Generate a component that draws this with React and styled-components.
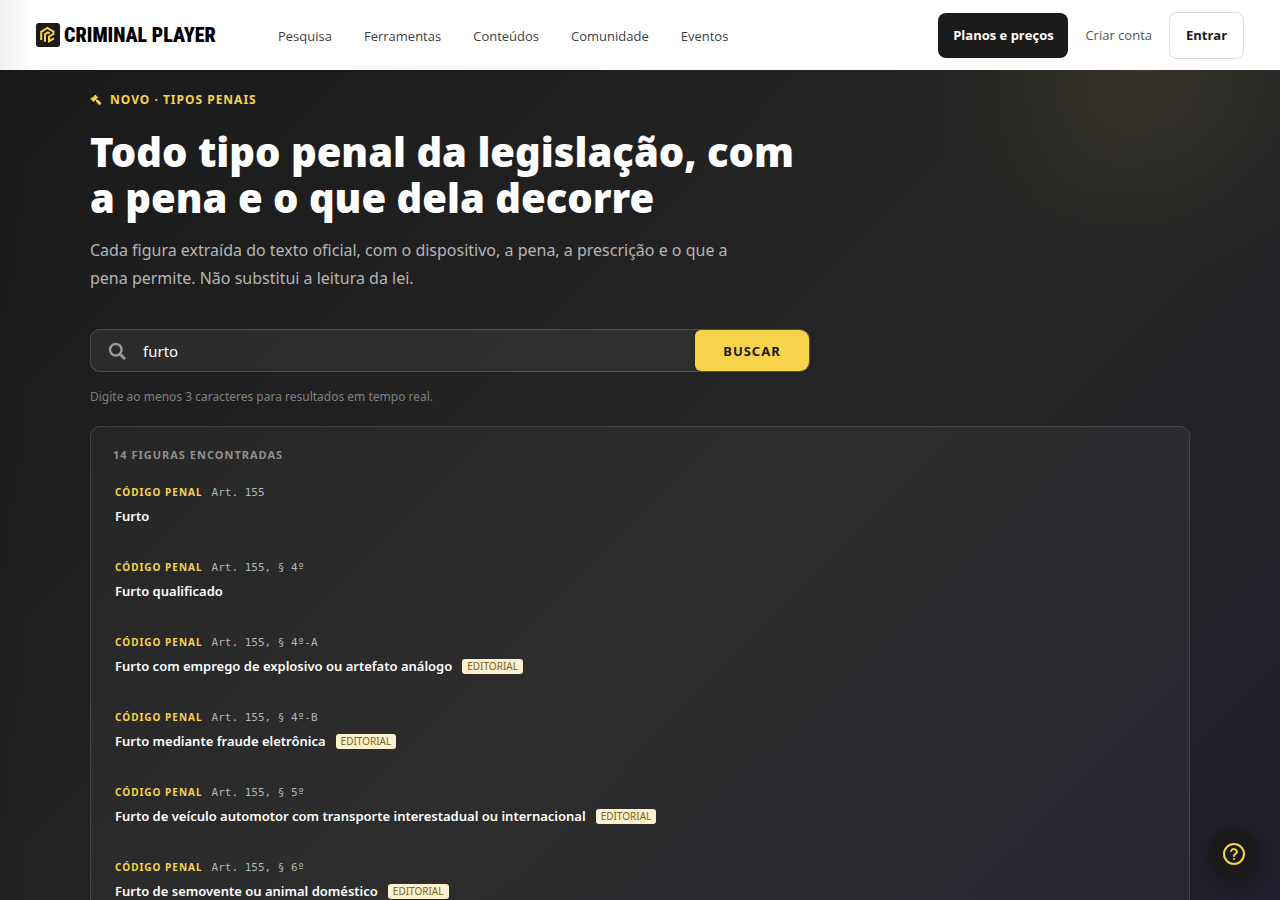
import React, { useState } from "react";
import styled, { createGlobalStyle } from "styled-components";

const GlobalStyle = createGlobalStyle`
  * {
    box-sizing: border-box;
  }
  html, body {
    margin: 0;
    height: 100%;
    overflow: hidden;
  }
  #root {
    height: 100%;
  }
  body, button, input {
    font-family: "Segoe UI", "Noto Sans", "Open Sans", sans-serif;
  }
  a {
    color: inherit;
    text-decoration: none;
  }
`;

const Page = styled.div`
  display: flex;
  flex-direction: column;
  height: 100%;
  position: relative;
`;

const EdgeShade = styled.div`
  position: absolute;
  inset: 0 auto 0 0;
  width: 32px;
  background: linear-gradient(90deg, rgba(0, 0, 0, 0.06), rgba(0, 0, 0, 0));
  pointer-events: none;
`;

const Header = styled.header`
  display: flex;
  align-items: center;
  flex: 0 0 70px;
  padding: 0 36px;
  background: #fff;
  font-family: "Segoe UI", "Open Sans", sans-serif;
`;

const Brand = styled.a`
  display: flex;
  align-items: center;
  gap: 4px;
  width: 226px;
  font-family: "Roboto Condensed", Roboto, sans-serif;
  font-size: 20px;
  font-weight: 900;
  line-height: 24px;
  color: #000;
  white-space: nowrap;
`;

const Nav = styled.nav`
  display: flex;
  gap: 32px;
  margin-left: 16px;
  padding-top: 2px;
  font-size: 13px;
  font-weight: 500;
  color: #404040;
`;

const Account = styled.div`
  display: flex;
  align-items: center;
  gap: 17px;
  margin-left: auto;
  font-size: 13px;
  color: #555;
`;

const HeaderButton = styled.a`
  display: flex;
  align-items: center;
  justify-content: center;
  min-width: ${(props) => (props.$dark ? "130px" : "75px")};
  height: ${(props) => (props.$dark ? "45px" : "47px")};
  border: ${(props) => (props.$dark ? "none" : "1px solid #ddd")};
  border-radius: 8px;
  background: ${(props) => (props.$dark ? "#1a1a1a" : "#fff")};
  color: ${(props) => (props.$dark ? "#fff" : "#1a1a1a")};
  font-weight: 700;
`;

const Hero = styled.main`
  flex: 1;
  min-height: 0;
  overflow: hidden;
  padding: 20px 90px 0;
  background:
    radial-gradient(circle at 1140px 0px, rgba(247, 211, 74, 0.08), rgba(247, 211, 74, 0) 210px),
    linear-gradient(135deg, #1a1a1a 0%, #252525 56%, #1e1e2c 106%);
  color: #fff;
`;

const Eyebrow = styled.div`
  display: flex;
  align-items: center;
  gap: 8px;
  font-size: 12px;
  font-weight: 700;
  line-height: 20px;
  letter-spacing: 1px;
  color: #f7d34a;
`;

const Title = styled.h1`
  max-width: 720px;
  margin: 19px 0 15px;
  font-size: 40px;
  font-weight: 900;
  line-height: 46px;
`;

const Lead = styled.p`
  max-width: 660px;
  margin: 0 0 37px;
  font-size: 16px;
  line-height: 28px;
  color: #b5b5b5;
`;

const SearchForm = styled.form`
  display: flex;
  align-items: stretch;
  max-width: 720px;
  height: 43px;
  overflow: hidden;
  border: 1px solid rgba(255, 255, 255, 0.16);
  border-radius: 10px;
  background: rgba(255, 255, 255, 0.06);
`;

const SearchLabel = styled.label`
  display: flex;
  align-items: center;
  padding: 0 17px;
  color: #999;
`;

const SearchInput = styled.input`
  flex: 1;
  min-width: 0;
  padding: 0;
  border: 0;
  outline: 0;
  background: transparent;
  font-size: 15px;
  color: #fff;
`;

const SearchButton = styled.button`
  width: 114px;
  border: 0;
  border-radius: 6px;
  background: #f7d34a;
  font-size: 13px;
  font-weight: 700;
  letter-spacing: 1px;
  color: #1a1a1a;
`;

const Hint = styled.p`
  margin: 14px 0 19px;
  font-size: 12px;
  line-height: 21px;
  color: #808080;
`;

const Results = styled.section`
  padding: 16px 22px;
  border: 1px solid rgba(255, 255, 255, 0.12);
  border-radius: 10px;
  background: rgba(255, 255, 255, 0.04);
`;

const ResultsTitle = styled.h2`
  margin: 0 0 18px;
  font-size: 11px;
  font-weight: 700;
  line-height: 24px;
  letter-spacing: 1px;
  color: #909090;
`;

const ResultList = styled.ul`
  display: flex;
  flex-direction: column;
  gap: 30px;
  margin: 0;
  padding: 0 2px;
  list-style: none;
`;

const ResultLink = styled.a`
  display: block;
`;

const Meta = styled.div`
  display: flex;
  align-items: center;
  gap: 9px;
  height: 14px;
`;

const Law = styled.span`
  font-size: 10px;
  font-weight: 700;
  letter-spacing: 1px;
  color: #f7d34a;
`;

const Article = styled.span`
  font-family: Consolas, "DejaVu Sans Mono", monospace;
  font-size: 11px;
  color: #b5b5b5;
`;

const Name = styled.div`
  display: flex;
  align-items: center;
  gap: 10px;
  margin-top: 4px;
  font-size: 13px;
  font-weight: 600;
  line-height: 27px;
`;

const Tag = styled.span`
  padding: 0 5px;
  border-radius: 3px;
  background: #fdf0cc;
  font-size: 10px;
  font-weight: 400;
  line-height: 15px;
  color: #7a6529;
`;

const HelpButton = styled.button`
  position: absolute;
  right: 20px;
  bottom: 20px;
  display: flex;
  align-items: center;
  justify-content: center;
  width: 52px;
  height: 52px;
  padding: 0;
  border: 0;
  border-radius: 50%;
  background: #1a1a1a;
  box-shadow: 0 4px 16px rgba(0, 0, 0, 0.25);
  color: #f7d34a;
`;

const links = ["Pesquisa", "Ferramentas", "Conteúdos", "Comunidade", "Eventos"];

const results = [
  { article: "Art. 155", name: "Furto" },
  { article: "Art. 155, § 4º", name: "Furto qualificado" },
  { article: "Art. 155, § 4º-A", name: "Furto com emprego de explosivo ou artefato análogo", editorial: true },
  { article: "Art. 155, § 4º-B", name: "Furto mediante fraude eletrônica", editorial: true },
  { article: "Art. 155, § 5º", name: "Furto de veículo automotor com transporte interestadual ou internacional", editorial: true },
  { article: "Art. 155, § 6º", name: "Furto de semovente ou animal doméstico", editorial: true },
];

function LogoMark() {
  return (
    <svg width="24" height="24" viewBox="0 0 24 24" fill="none" aria-hidden="true">
      <rect width="24" height="24" rx="3" fill="#1c1c1c" />
      <path d="M5.2 17V8.8L11.3 5L17.4 8.6V11L13 13.6V18.2L18 15.4" stroke="#f7d34a" strokeWidth="2" />
      <path d="M9 18.8V11.2L11.8 9.4L13.6 10.4" stroke="#f7d34a" strokeWidth="2" />
    </svg>
  );
}

function GavelIcon() {
  return (
    <svg width="12" height="12" viewBox="0 0 12 12" fill="currentColor" aria-hidden="true">
      <path d="M5.2 0.5L8.2 3.5L7.3 4.4L6.9 4.2L6.1 5L7.2 6.1L8 5.8L11.5 9.3L9.5 11.3L6 7.8L6.3 7L5.2 5.9L4.4 6.7L4.6 7.1L3.7 8L0.3 4.7L1.2 3.8L1.7 4L4.5 1.7L4.3 1.3Z" />
    </svg>
  );
}

function SearchIcon() {
  return (
    <svg width="18" height="18" viewBox="0 0 18 18" fill="none" stroke="currentColor" strokeWidth="2.5" aria-hidden="true">
      <circle cx="7.8" cy="7.8" r="5.8" />
      <path d="M12 12L17 17" strokeWidth="3" />
    </svg>
  );
}

function HelpIcon() {
  return (
    <svg width="24" height="24" viewBox="0 0 24 24" fill="none" stroke="currentColor" strokeWidth="2" strokeLinecap="round" aria-hidden="true">
      <circle cx="12" cy="12" r="10" />
      <path d="M9.1 9a3 3 0 0 1 5.8 1c0 2-3 2-3 4M12 17h.01" />
    </svg>
  );
}

function App() {
  const [query, setQuery] = useState("furto");

  return (
    <Page>
      <GlobalStyle />
      <Header>
        <Brand href="#">
          <LogoMark />
          CRIMINAL PLAYER
        </Brand>
        <Nav>
          {links.map((link) => (
            <a href="#" key={link}>{link}</a>
          ))}
        </Nav>
        <Account>
          <HeaderButton href="#" $dark>Planos e preços</HeaderButton>
          <a href="#">Criar conta</a>
          <HeaderButton href="#">Entrar</HeaderButton>
        </Account>
      </Header>
      <Hero>
        <Eyebrow>
          <GavelIcon />
          NOVO · TIPOS PENAIS
        </Eyebrow>
        <Title>Todo tipo penal da legislação, com a pena e o que dela decorre</Title>
        <Lead>
          Cada figura extraída do texto oficial, com o dispositivo, a pena, a prescrição e o que a
          pena permite. Não substitui a leitura da lei.
        </Lead>
        <SearchForm onSubmit={(e) => e.preventDefault()}>
          <SearchLabel htmlFor="busca" aria-label="Buscar tipo penal">
            <SearchIcon />
          </SearchLabel>
          <SearchInput id="busca" value={query} onChange={(e) => setQuery(e.target.value)} />
          <SearchButton type="submit">BUSCAR</SearchButton>
        </SearchForm>
        <Hint>Digite ao menos 3 caracteres para resultados em tempo real.</Hint>
        <Results>
          <ResultsTitle>14 FIGURAS ENCONTRADAS</ResultsTitle>
          <ResultList>
            {results.map((item) => (
              <li key={item.article}>
                <ResultLink href="#">
                  <Meta>
                    <Law>CÓDIGO PENAL</Law>
                    <Article>{item.article}</Article>
                  </Meta>
                  <Name>
                    {item.name}
                    {item.editorial && <Tag>EDITORIAL</Tag>}
                  </Name>
                </ResultLink>
              </li>
            ))}
          </ResultList>
        </Results>
      </Hero>
      <EdgeShade />
      <HelpButton type="button" aria-label="Ajuda">
        <HelpIcon />
      </HelpButton>
    </Page>
  );
}

export default App;
